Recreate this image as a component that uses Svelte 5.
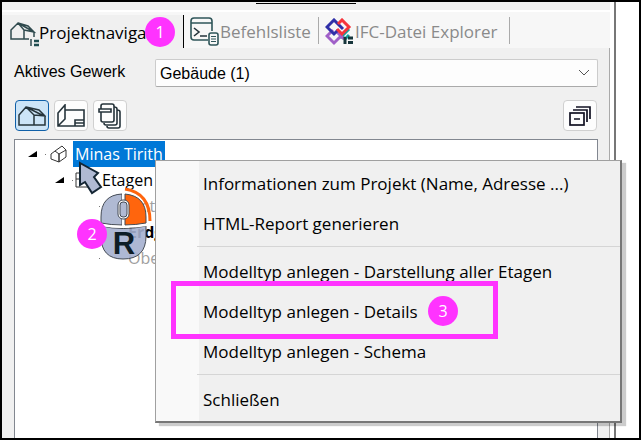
<script>
  const tabs = [
    { id: 'project', label: 'Projektnavigator' },
    { id: 'commands', label: 'Befehlsliste' },
    { id: 'ifc', label: 'IFC-Datei Explorer' }
  ];

  const menuGroups = [
    ['Informationen zum Projekt (Name, Adresse ...)', 'HTML-Report generieren'],
    [
      'Modelltyp anlegen - Darstellung aller Etagen',
      'Modelltyp anlegen - Details',
      'Modelltyp anlegen - Schema'
    ],
    ['Schließen']
  ];

  const floors = [
    { name: 'Untergeschoss', active: false },
    { name: 'Erdgeschoss', active: true },
    { name: 'Obergeschoss', active: false }
  ];

  let activeTab = 'project';
  let activeView = 'building';
</script>

<div class="window">
  <div class="panel">
    <div class="grip"><span></span></div>

    <div class="tabs" role="tablist">
      {#each tabs as tab}
        <button
          class="tab {tab.id}"
          class:active={activeTab === tab.id}
          role="tab"
          aria-selected={activeTab === tab.id}
          on:click={() => (activeTab = tab.id)}
        >
          {#if tab.id === 'project'}
            <svg width="30" height="28" viewBox="-1 -2 30 28" fill="none" stroke="#2f4a4e" stroke-width="1.5">
              <path d="M1 9 8 2 14 9V18H1ZM8 2 18 5 24 11 14 9M14 18H19M24 11V16M8 2 24 11" />
              <path d="M21 18V25" />
              <path d="M24 20H29M24 24H29" stroke="#1f4d50" stroke-width="2.5" />
            </svg>
          {:else if tab.id === 'commands'}
            <svg width="30" height="30" viewBox="0 0 30 30" fill="none" stroke="#2f5559" stroke-width="1.6">
              <path d="M18 23H4Q1 23 1 20V4Q1 1 4 1H19Q22 1 22 4V14M1 6H22" />
              <path d="m4 11 5 4-5 4M10 19H17" stroke="#25343b" />
              <rect x="19" y="16" width="9" height="12" rx="2" fill="#f7f7f7" />
              <path d="M21 19.500H26M21 22H26M21 24.500H26" stroke-width="1.200" />
            </svg>
          {:else}
            <svg width="30" height="28" viewBox="0 0 30 28" fill="none" stroke-width="3">
              <path d="M13 14 20 21 24 17M15 20 24 11" stroke="#12a29d" />
              <path d="M8 12 2 18 9 25 16 18 12 14 19 21" stroke="#a060c8" />
              <path d="M13 12 9 16 2 9 9 2 18 11" stroke="#3030a8" />
              <path d="M13 6 17 2 24 9 17 16 12 11" stroke="#f6353c" />
              <path d="M20 19V26" stroke="#17363c" />
              <path d="M23 20H28M23 24.500H28" stroke="#17363c" />
            </svg>
          {/if}
          <span>{tab.label}</span>
        </button>
      {/each}
    </div>

    <div class="content">
      <div class="field">
        <label for="trade">Aktives Gewerk</label>
        <div class="select">
          <select id="trade">
            <option>Gebäude (1)</option>
          </select>
          <svg width="12" height="8" viewBox="0 0 12 8" fill="none" stroke="#555">
            <path d="m1 1 5 5 5-5" />
          </svg>
        </div>
      </div>

      <div class="toolbar">
        <button class="tool" class:on={activeView === 'building'} aria-label="Gebäude" on:click={() => (activeView = 'building')}>
          <svg width="28" height="21" viewBox="0 -1 28 21" fill="none" stroke="#26343b" stroke-width="1.500">
            <path d="M1 9 8 1 16 9V19H1ZM8 1 21 4 27 10 16 9M16 19H27V10M8 1 26 10" />
          </svg>
        </button>
        <button class="tool" class:on={activeView === 'plan'} aria-label="Grundriss" on:click={() => (activeView = 'plan')}>
          <svg width="28" height="24" viewBox="0 0 28 24" fill="none" stroke="#26343b" stroke-width="1.600">
            <path d="M8 6H27V22H1V9L8 1V15L1 22M18 22V16H27M18 19H27" />
          </svg>
        </button>
        <button class="tool" class:on={activeView === 'sheets'} aria-label="Listen" on:click={() => (activeView = 'sheets')}>
          <svg width="24" height="26" viewBox="0 0 24 26" fill="none" stroke="#26343b" stroke-width="1.600">
            <path d="M3 6V3Q3 1 5 1H14Q16 1 16 3V17Q16 19 14 19H5Q3 19 3 17V9" />
            <path d="M1 6H13V9H1ZM16 4Q19 4 19 6V20Q19 22 17 22H8Q6 22 6 20M19 7Q22 7 22 9V23Q22 25 20 25H11Q9 25 9 23" />
          </svg>
        </button>
        <button class="tool last" aria-label="Alle einklappen">
          <svg width="22" height="20" viewBox="0 0 22 20" fill="none" stroke="#111122" stroke-width="1.700">
            <rect x="1" y="7" width="14" height="12" />
            <path d="M5 13H11M4 4H18V16M7 1H21V13" />
          </svg>
        </button>
      </div>

      <div class="tree">
        <div class="row root">
          <svg class="arrow" width="9" height="6"><path d="M9 0V6H0Z" /></svg>
          <i></i>
          <svg width="18" height="18" viewBox="0 0 18 18" fill="#fff" stroke="#333">
            <path d="M1 9 5 6 9 9V17L1 14ZM5 6 12 1 16 5V12L9 17V9L16 5" />
          </svg>
          <span class="selected">Minas Tirith</span>
        </div>
        <div class="row group">
          <svg class="arrow" width="9" height="6"><path d="M9 0V6H0Z" /></svg>
          <i></i>
          <svg width="16" height="17" viewBox="0 0 16 17" fill="none" stroke="#333">
            <path d="M1 1H15V15H1ZM1 7H7" />
          </svg>
          <span>Etagen</span>
        </div>
        {#each floors as floor}
          <div class="row floor" class:current={floor.active}>
            <i></i>
            <span>{floor.name}</span>
          </div>
        {/each}
      </div>
    </div>
  </div>
  <div class="splitter"></div>
  <div class="canvas"></div>

  <div class="menu" role="menu">
    {#each menuGroups as group, i}
      {#if i > 0}
        <hr />
      {/if}
      {#each group as item}
        <button class="item" role="menuitem">{item}</button>
      {/each}
    {/each}
  </div>

  <!-- mouse hint: pointer and right click -->
  <svg class="mouse" width="80" height="104" viewBox="0 0 80 104">
    <path d="M3 3 21 13 17 17 24 27 15 33 8 22 3 25Z" fill="#b0bad3" stroke="#142634" stroke-width="2" />
    <path d="M24 66Q46 71 69 66V76Q69 99 46 99Q24 99 24 76Z" fill="#a5b0cf" fill-opacity=".9" stroke="#444b55" />
    <path d="M24 63V57Q24 35 45 34V65Q34 65 24 63Z" fill="#b0bad3" stroke="#444b55" />
    <path d="M48 34Q69 36 69 57V63Q58 65 48 65Z" fill="#ff650d" stroke="#444b55" />
    <path d="M23 65Q46 69 70 65M46 33V67" fill="none" stroke="#fff" stroke-width="2" />
    <rect x="41" y="40" width="11" height="19" rx="5" fill="#fff" stroke="#444b55" />
    <rect x="43" y="42" width="7" height="15" rx="3" fill="#b0bad3" stroke="#444b55" />
    <path d="M48 29Q73 33 73 61" fill="none" stroke="#ff650d" stroke-width="3" />
    <text x="47" y="94" text-anchor="middle">R</text>
  </svg>

  <div class="highlight"></div>
  <span class="badge one">1</span>
  <span class="badge two">2</span>
  <span class="badge three">3</span>
</div>

<style>
  :global(body) {
    margin: 0;
  }

  .window {
    position: relative;
    display: flex;
    box-sizing: border-box;
    min-height: 100vh;
    overflow: hidden;
    border: 2px solid #000;
    background: #fff;
    color: #000;
    font-family: 'Open Sans', 'Noto Sans', sans-serif;
  }

  button {
    font-family: inherit;
    cursor: pointer;
  }

  .panel {
    flex: 1;
    display: flex;
    flex-direction: column;
    background: #f0f0f0;
  }

  .splitter {
    width: 4px;
    border-right: 2px solid #777;
    background: #fff;
  }

  .canvas {
    width: 23px;
  }

  .grip {
    height: 8px;
    border-bottom: 2px solid #fff;
  }

  .grip span {
    display: block;
    width: 100px;
    height: 1px;
    margin: 1px auto 0 254px;
    background: #000;
  }

  .tabs {
    display: flex;
    height: 36px;
    background: #f7f7f7;
  }

  .tab {
    display: flex;
    align-items: center;
    box-sizing: border-box;
    position: relative;
    padding: 3px 0 0 6px;
    border: 0;
    background: none;
    color: #8a8a8a;
    font-size: 17px;
    white-space: nowrap;
  }

  .tab svg {
    flex: none;
  }

  .tab.project {
    width: 182px;
    margin-top: 3px;
    padding: 2px 30px 0 7px;
    border-right: 1px solid #000;
  }

  .tab.project span {
    overflow: hidden;
  }

  .tab.active {
    background: #f0f0f0;
    color: #000;
  }

  .tab.commands {
    width: 135px;
  }

  .tab.ifc {
    width: 191px;
  }

  .tab.commands::after,
  .tab.ifc::after {
    content: '';
    position: absolute;
    top: 5px;
    right: 0;
    bottom: 4px;
    width: 1px;
    background: #aaa;
  }

  .content {
    flex: 1;
    display: flex;
    flex-direction: column;
    padding: 11px 11px 0 12px;
    border-right: 1px solid #aaa;
  }

  .field {
    display: flex;
    align-items: center;
    font-family: 'Liberation Sans', Arial, sans-serif;
    font-size: 16px;
  }

  .field label {
    width: 141px;
    padding-bottom: 2px;
  }

  .select {
    flex: 1;
    position: relative;
  }

  .select select {
    appearance: none;
    width: 100%;
    height: 28px;
    padding: 0 24px 0 4px;
    border: 1px solid #ccc;
    border-bottom-color: #aaa;
    border-radius: 2px;
    background: #fdfdfd;
    color: #000;
    font: inherit;
  }

  .select svg {
    position: absolute;
    top: 10px;
    right: 8px;
    pointer-events: none;
  }

  .toolbar {
    display: flex;
    gap: 5px;
    padding: 13px 1px 8px;
  }

  .tool {
    display: flex;
    align-items: center;
    justify-content: center;
    width: 34px;
    height: 31px;
    padding: 0;
    border: 1px solid #d0d0d0;
    border-radius: 4px;
    background: #fdfdfd;
  }

  .tool.on {
    border-color: #1060a8;
    background: #cce4f7;
  }

  .tool.last {
    margin-left: auto;
  }

  .tree {
    flex: 1;
    padding-top: 1px;
    border: 1px solid #828790;
    border-bottom: 0;
    background: #fff;
    font-size: 16px;
  }

  .row {
    display: flex;
    align-items: center;
    height: 26px;
    padding-left: 13px;
    white-space: nowrap;
  }

  .row i {
    width: 1px;
    height: 1px;
    margin: 0 4px 0 8px;
    background: #777;
  }

  .row span {
    padding: 0 2px;
    line-height: 26px;
  }

  .root .selected {
    margin-left: 5px;
    background: #0078d7;
    color: #fff;
  }

  .group {
    padding-left: 40px;
  }

  .group i {
    margin-right: 2px;
  }

  .group span {
    margin-left: 9px;
  }

  .floor {
    padding-left: 76px;
    color: #a0a0a0;
  }

  .floor i {
    margin-right: 26px;
  }

  .floor span {
    width: 28px;
    overflow: hidden;
  }

  .current {
    color: #000;
    font-weight: bold;
  }

  .menu {
    position: absolute;
    top: 158px;
    left: 153px;
    right: 17px;
    padding: 2px 0;
    border: 1px solid #a0a0a0;
    border-right: 2px solid #777;
    border-bottom: 2px solid #777;
    background: linear-gradient(90deg, #f9f9f9 43px, #f0f0f0 43px);
    box-shadow: 4px 3px 1px rgba(0, 0, 0, 0.2);
  }

  .item {
    display: block;
    width: 100%;
    height: 40px;
    padding: 0 0 0 47px;
    border: 0;
    background: none;
    color: #000;
    font-size: 17px;
    text-align: left;
    white-space: nowrap;
  }

  .menu hr {
    height: 1px;
    margin: 3px 0 4px 41px;
    border: 0;
    background: #d5d5d5;
  }

  .mouse {
    position: absolute;
    top: 158px;
    left: 75px;
  }

  .mouse text {
    font: bold 31px 'Liberation Sans', Arial, sans-serif;
    fill: #0e1d26;
  }

  .highlight {
    position: absolute;
    top: 279px;
    left: 169px;
    box-sizing: border-box;
    width: 327px;
    height: 58px;
    border: 5px solid #ff33ff;
    pointer-events: none;
  }

  .badge {
    position: absolute;
    width: 30px;
    height: 30px;
    border-radius: 50%;
    background: #ff33ff;
    color: #fff;
    font-size: 16px;
    line-height: 30px;
    text-align: center;
  }

  .one {
    top: 15px;
    left: 143px;
  }

  .two {
    top: 217px;
    left: 75px;
  }

  .three {
    top: 294px;
    left: 426px;
  }
</style>
